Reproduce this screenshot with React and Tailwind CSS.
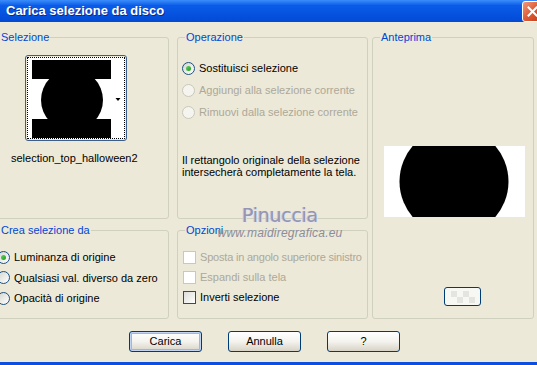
import React from 'react';

const Radio = ({ checked, disabled }) => (
  <span
    className={`flex h-[13px] w-[13px] shrink-0 items-center justify-center rounded-full border ${
      disabled ? 'border-[#cac8bb] bg-[#f5f4ef]' : 'border-[#1c5180] bg-linear-to-br from-[#d6d6cf] to-white'
    }`}
  >
    {checked && <span className="h-[5px] w-[5px] rounded-full bg-linear-to-br from-[#5fd35f] to-[#1a9a1a]" />}
  </span>
);

const Check = ({ disabled }) => (
  <span
    className={`h-[13px] w-[13px] shrink-0 border ${
      disabled ? 'border-[#cac8bb] bg-white' : 'border-[#1c5180] bg-linear-to-br from-[#dcdcd7] to-white'
    }`}
  />
);

const Group = ({ title, className, children }) => (
  <fieldset className={`min-w-0 rounded-[3px] border border-[#d0d0bf] ${className}`}>
    <legend className="ml-[7px] px-[1px] text-[11px] leading-[13px] text-[#0046d5]">{title}</legend>
    {children}
  </fieldset>
);

const Row = ({ children, disabled, h = 'h-[22px]' }) => (
  <div className={`flex items-center gap-[4px] whitespace-nowrap ${h} ${disabled ? 'text-[#aca899]' : 'text-black'}`}>{children}</div>
);

const Button = ({ children, primary }) => (
  <button
    type="button"
    className={`h-[21px] w-[73px] rounded-[3px] border border-[#003c74] bg-linear-to-b from-white via-[#f4f3ee] to-[#d8d3c6] text-[11px] text-black ${
      primary ? 'shadow-[inset_0_0_0_1px_#c2d4f4,inset_0_0_0_2px_#9ab7eb]' : ''
    }`}
  >
    {children}
  </button>
);

export default function App() {
  return (
    <div className="relative flex h-[365px] w-[537px] flex-col overflow-hidden bg-[#ece9d8] font-['Liberation_Sans',Arial,sans-serif] text-[11px]">
      {/* title bar */}
      <div className="flex h-[22px] shrink-0 items-center bg-linear-to-b from-[#3b8dfa] via-[#0a5ce8] via-25% to-[#0349d6] pl-[6px]">
        <span className="text-[13px] font-bold text-white [text-shadow:1px_1px_#0b2a8a]">Carica selezione da disco</span>
        <span className="-mr-[6px] ml-auto flex h-[21px] w-[21px] items-center justify-center rounded-[3px] border border-white bg-linear-to-br from-[#f0977a] via-[#de5a34] to-[#c03a16]">
          <svg width="11" height="11" viewBox="0 0 11 11">
            <path d="M1.5 1.5 L9.5 9.5 M9.5 1.5 L1.5 9.5" stroke="white" strokeWidth="2" strokeLinecap="square" />
          </svg>
        </span>
      </div>

      {/* groups */}
      <div className="-ml-[8px] mt-[9px] flex">
        <div className="flex flex-col gap-[5px]">
          <div className="flex gap-[8px]">
            <Group title="Selezione" className="h-[188px] w-[177px]">
              <div className="flex flex-col pl-[32px] pt-[11px]">
                <div className="h-[86px] w-[102px] rounded-[3px] border border-[#3a5f8e] p-[1px]">
                  <div className="h-full w-full border border-dotted border-black bg-white p-[2px]">
                    <svg width="94" height="78" viewBox="0 0 94 78" className="block">
                      <rect x="0" y="0" width="88" height="78" fill="white" />
                      <rect x="2" y="0" width="79" height="19" fill="black" />
                      <rect x="2" y="59" width="79" height="19" fill="black" />
                      <circle cx="42" cy="40" r="31" fill="black" />
                      <path d="M85.5 38 L90.5 38 L88 41 Z" fill="black" />
                    </svg>
                  </div>
                </div>
                <div className="-ml-[14px] mt-[9px] whitespace-nowrap text-black">selection_top_halloween2</div>
              </div>
            </Group>
            <Group title="Operazione" className="h-[188px] w-[191px]">
              <div className="flex flex-col pl-[4px] pt-[13px]">
                <Row>
                  <Radio checked />
                  <span>Sostituisci selezione</span>
                </Row>
                <Row disabled>
                  <Radio disabled />
                  <span>Aggiungi alla selezione corrente</span>
                </Row>
                <Row disabled>
                  <Radio disabled />
                  <span>Rimuovi dalla selezione corrente</span>
                </Row>
                <p className="mt-[31px] whitespace-nowrap leading-[12px] text-black">
                  Il rettangolo originale della selezione
                  <br />
                  intersecherà completamente la tela.
                </p>
              </div>
            </Group>
          </div>
          <div className="flex gap-[8px]">
            <Group title="Crea selezione da" className="h-[95px] w-[177px]">
              <div className="flex flex-col pl-[4px] pt-[10px]">
                <Row h="h-[20.5px]">
                  <Radio checked />
                  <span>Luminanza di origine</span>
                </Row>
                <Row h="h-[20.5px]">
                  <Radio />
                  <span>Qualsiasi val. diverso da zero</span>
                </Row>
                <Row h="h-[20.5px]">
                  <Radio />
                  <span>Opacità di origine</span>
                </Row>
              </div>
            </Group>
            <Group title="Opzioni" className="h-[95px] w-[191px]">
              <div className="flex flex-col pl-[5px] pt-[10px]">
                <Row disabled h="h-[20px]">
                  <Check disabled />
                  <span className="tracking-[-0.2px]">Sposta in angolo superiore sinistro</span>
                </Row>
                <Row disabled h="h-[20px]">
                  <Check disabled />
                  <span>Espandi sulla tela</span>
                </Row>
                <Row h="h-[20px]">
                  <Check />
                  <span>Inverti selezione</span>
                </Row>
              </div>
            </Group>
          </div>
        </div>

        <Group title="Anteprima" className="ml-[4px] h-[288px] w-[162px]">
          <div className="flex flex-col items-start pl-[11px]">
            <svg width="141" height="71" viewBox="0 0 141 71" className="mt-[102px] block">
              <rect width="141" height="71" fill="white" />
              <circle cx="70" cy="35.5" r="54.5" fill="black" />
            </svg>
            <span className="ml-[60px] mt-[70px] flex h-[19px] w-[37px] items-center justify-center rounded-[3px] border border-[#003c74] bg-[#f7f7f4]">
              <svg width="24" height="12" viewBox="0 0 24 12">
                <g fill="#e4e4e0">
                  <rect x="0" y="0" width="6" height="6" />
                  <rect x="12" y="0" width="6" height="6" />
                  <rect x="6" y="6" width="6" height="6" />
                  <rect x="18" y="6" width="6" height="6" />
                </g>
              </svg>
            </span>
          </div>
        </Group>
      </div>

      {/* buttons */}
      <div className="mt-[12px] flex gap-[26px] pl-[129px]">
        <Button primary>Carica</Button>
        <Button>Annulla</Button>
        <Button>?</Button>
      </div>

      <div className="mt-auto h-[3px] bg-[#0b4fe0]" />

      {/* watermark */}
      <div className="pointer-events-none absolute left-[219px] top-[204px] flex w-[122px] flex-col items-center">
        <span className="font-['DejaVu_Sans',sans-serif] text-[19px] leading-[22px] tracking-[-0.3px] text-[#9395b2] [text-shadow:1px_1px_#e6e6ee,-1px_0_#c4c5d6]">Pinuccia</span>
        <span className="mt-[1px] font-['Liberation_Sans',sans-serif] text-[12px] italic leading-[13px] tracking-[0.2px] text-[#8c8c9c]">www.maidiregrafica.eu</span>
      </div>
    </div>
  );
}
